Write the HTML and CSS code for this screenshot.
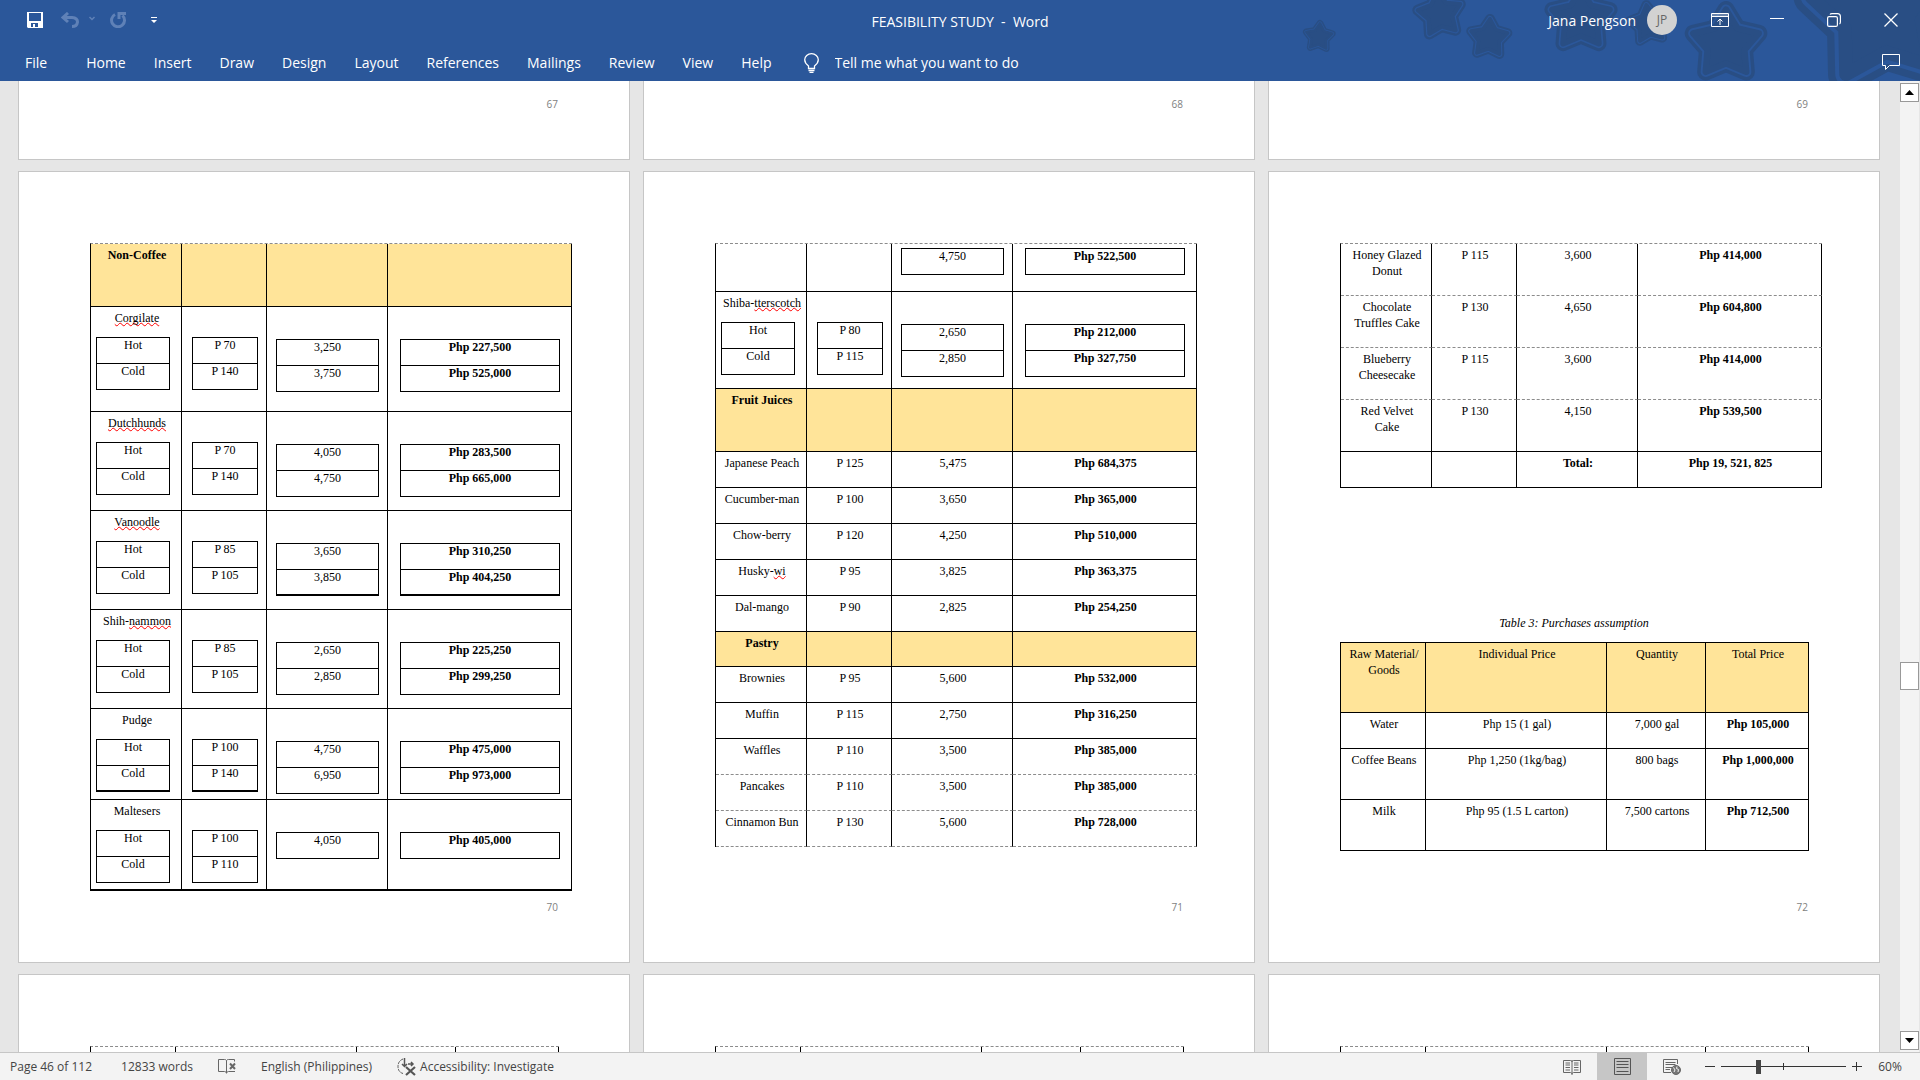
FILE: index.html
```html
<!DOCTYPE html>
<html lang="en">
  <head>
    <meta charset="UTF-8" />
    <meta name="viewport" content="width=device-width, initial-scale=1.0" />
    <title>FEASIBILITY STUDY - Word</title>
    <link rel="stylesheet" href="styles.css">
  </head>
  <body>
    <header class="header">
      <svg class="stars" width="620" height="81" viewBox="1300 0 620 81" aria-hidden="true">
        <defs>
          <path id="star-path" d="M0-80 26.500-36.400 76.100-24.700 42.800 13.900 47 64.700 0 45-47 64.700-42.800 13.900-76.100-24.700-26.500-36.400Z" />
          <g id="star" stroke-linejoin="round">
            <use href="#star-path" fill="#294e84" stroke="#294e84" stroke-width="40" />
            <use href="#star-path" fill="#2b579a" stroke="#2b579a" stroke-width="24" />
            <use href="#star-path" fill="#294e84" stroke="#294e84" stroke-width="15" />
          </g>
        </defs>
        <use href="#star" transform="translate(1319 37) rotate(4) scale(.17)" />
        <use href="#star" transform="translate(1440 14) rotate(-8) scale(.28)" />
        <use href="#star" transform="translate(1489 38) rotate(3) scale(.24)" />
        <use href="#star" transform="translate(1581 19) scale(.38)" />
        <use href="#star" transform="translate(1649 24) rotate(-8) scale(.24)" />
        <use href="#star" transform="translate(1726 44) scale(.43)" />
        <use href="#star" transform="translate(1882 12) rotate(-6) scale(.9)" />
      </svg>

      <div class="titlebar">
        <div class="quick">
          <button class="quick-btn save" aria-label="Save">
            <svg width="16" height="16" viewBox="0 0 16 16"><path fill="#fff" fill-rule="evenodd" d="M0 0H16V16H1L0 15ZM2 1V9H14V1ZM4 11V15H6V12H8V15H11V11Z" /></svg>
          </button>
          <button class="quick-btn undo" aria-label="Undo" disabled>
            <svg width="36" height="16" viewBox="0 0 36 16" fill="none" stroke="#5f81b7"><path stroke-width="3" d="M7 1 2 5.500 7 10M2 5.500H11Q16.500 6 16.500 10Q16 14.500 11 14.500" /><path stroke-width="1.500" d="M28.500 5 31 7.500 33.500 5" /></svg>
          </button>
          <button class="quick-btn redo" aria-label="Redo" disabled>
            <svg width="18" height="16" viewBox="0 0 18 16" fill="none" stroke="#5f81b7" stroke-width="3"><path d="M6 2.500A6.500 6.500 0 1 0 13.500 3.500M10 7V1.500H17" /></svg>
          </button>
          <button class="quick-btn" aria-label="Customize Quick Access Toolbar">
            <svg width="6" height="7" viewBox="0 0 6 7" fill="#fff"><path d="M0 0H6V1H0ZM0 3H6L3 6Z" /></svg>
          </button>
        </div>
        <h1 class="title">FEASIBILITY STUDY&nbsp; -&nbsp; Word</h1>
        <div class="window">
          <span class="user">Jana Pengson</span>
          <span class="avatar">JP</span>
          <button class="win-btn" aria-label="Ribbon Display Options">
            <svg width="18" height="14" viewBox="0 0 18 14" fill="none" stroke="#fff"><path d="M.5.5H17.500V13.500H.5ZM.5 3.500H17.500M9 12V6M6.500 8.500 9 6 11.500 8.500" /><path d="M1 2H17" opacity=".6" /></svg>
          </button>
          <button class="win-btn" aria-label="Minimize">
            <svg width="14" height="14" viewBox="0 0 14 14" stroke="#fff"><path d="M0 5.500H14" /></svg>
          </button>
          <button class="win-btn" aria-label="Restore">
            <svg width="14" height="14" viewBox="0 0 14 14" fill="none" stroke="#fff" stroke-width="1.200"><rect x=".6" y="3.600" width="9.800" height="9.800" rx="1.500" /><path d="M3 1.500Q3.500.6 5 .6H10.500Q13.400.6 13.400 3.500V9Q13.400 10.500 12.500 11" /></svg>
          </button>
          <button class="win-btn" aria-label="Close">
            <svg width="14" height="14" viewBox="0 0 14 14" stroke="#fff" stroke-width="1.300"><path d="M.5.5 13.500 13.500M13.500.5.5 13.500" /></svg>
          </button>
        </div>
      </div>

      <div class="ribbon">
        <nav class="tabs">
          <a class="tab file" href="#">File</a>
          <a class="tab" href="#">Home</a>
          <a class="tab" href="#">Insert</a>
          <a class="tab" href="#">Draw</a>
          <a class="tab" href="#">Design</a>
          <a class="tab" href="#">Layout</a>
          <a class="tab" href="#">References</a>
          <a class="tab" href="#">Mailings</a>
          <a class="tab" href="#">Review</a>
          <a class="tab" href="#">View</a>
          <a class="tab" href="#">Help</a>
        </nav>
        <label class="tell">
          <svg width="15" height="20" viewBox="0 0 15 20" fill="none" stroke="#fff" stroke-width="1.300"><path d="M4.500 15.500V13Q.7 10 .7 6.800A6.800 6.100 0 0 1 14.300 6.800Q14.300 10 10.500 13V15.500ZM4.500 17.500H10.500M5.500 19.300H9.500" /></svg>
          <input class="tell-input" type="text" placeholder="Tell me what you want to do" />
        </label>
        <button class="win-btn" aria-label="Comments">
          <svg width="18" height="17" viewBox="0 0 18 17" fill="none" stroke="#fff"><path d="M.5.500H17.500V11.500H7.500L3.500 15.500V11.500H.5Z" /></svg>
        </button>
      </div>
    </header>

    <main class="canvas">
      <div class="pages">
        <section class="page page-end"><div class="page-number">67</div></section>
        <section class="page page-end"><div class="page-number">68</div></section>
        <section class="page page-end"><div class="page-number">69</div></section>

        <section class="page">
          <table class="sheet sales thick">
            <colgroup><col class="c-name"><col class="c-price"><col class="c-qty"><col></colgroup>
            <tr class="band"><th>Non-Coffee</th><td></td><td></td><td></td></tr>
            <tr class="drink drink-tall">
              <td><span class="typo">Corgilate</span><table class="inner size"><tr><td>Hot</td></tr><tr><td>Cold</td></tr></table></td>
              <td><table class="inner price"><tr><td>P 70</td></tr><tr><td>P 140</td></tr></table></td>
              <td><table class="inner qty"><tr><td>3,250</td></tr><tr><td>3,750</td></tr></table></td>
              <td><table class="inner total"><tr><td>Php 227,500</td></tr><tr><td>Php 525,000</td></tr></table></td>
            </tr>
            <tr class="drink">
              <td><span class="typo">Dutchhunds</span><table class="inner size"><tr><td>Hot</td></tr><tr><td>Cold</td></tr></table></td>
              <td><table class="inner price"><tr><td>P 70</td></tr><tr><td>P 140</td></tr></table></td>
              <td><table class="inner qty"><tr><td>4,050</td></tr><tr><td>4,750</td></tr></table></td>
              <td><table class="inner total"><tr><td>Php 283,500</td></tr><tr><td>Php 665,000</td></tr></table></td>
            </tr>
            <tr class="drink">
              <td><span class="typo">Vanoodle</span><table class="inner size"><tr><td>Hot</td></tr><tr><td>Cold</td></tr></table></td>
              <td><table class="inner price"><tr><td>P 85</td></tr><tr><td>P 105</td></tr></table></td>
              <td><table class="inner qty thick"><tr><td>3,650</td></tr><tr><td>3,850</td></tr></table></td>
              <td><table class="inner total thick"><tr><td>Php 310,250</td></tr><tr><td>Php 404,250</td></tr></table></td>
            </tr>
            <tr class="drink">
              <td>Shih-<span class="typo">nammon</span><table class="inner size"><tr><td>Hot</td></tr><tr><td>Cold</td></tr></table></td>
              <td><table class="inner price"><tr><td>P 85</td></tr><tr><td>P 105</td></tr></table></td>
              <td><table class="inner qty"><tr><td>2,650</td></tr><tr><td>2,850</td></tr></table></td>
              <td><table class="inner total"><tr><td>Php 225,250</td></tr><tr><td>Php 299,250</td></tr></table></td>
            </tr>
            <tr class="drink drink-short">
              <td>Pudge<table class="inner size thick"><tr><td>Hot</td></tr><tr><td>Cold</td></tr></table></td>
              <td><table class="inner price thick"><tr><td>P 100</td></tr><tr><td>P 140</td></tr></table></td>
              <td><table class="inner qty"><tr><td>4,750</td></tr><tr><td>6,950</td></tr></table></td>
              <td><table class="inner total"><tr><td>Php 475,000</td></tr><tr><td>Php 973,000</td></tr></table></td>
            </tr>
            <tr class="drink drink-short">
              <td>Maltesers<table class="inner size"><tr><td>Hot</td></tr><tr><td>Cold</td></tr></table></td>
              <td><table class="inner price"><tr><td>P 100</td></tr><tr><td>P 110</td></tr></table></td>
              <td><table class="inner qty"><tr><td>4,050</td></tr></table></td>
              <td><table class="inner total"><tr><td>Php 405,000</td></tr></table></td>
            </tr>
          </table>
          <div class="page-number">70</div>
        </section>

        <section class="page">
          <table class="sheet sales">
            <colgroup><col class="c-name"><col class="c-price"><col class="c-qty"><col></colgroup>
            <tr class="drink carried">
              <td></td>
              <td></td>
              <td><table class="inner qty"><tr><td>4,750</td></tr></table></td>
              <td><table class="inner total"><tr><td>Php 522,500</td></tr></table></td>
            </tr>
            <tr class="drink drink-mid">
              <td>Shiba-<span class="typo">tterscotch</span><table class="inner size"><tr><td>Hot</td></tr><tr><td>Cold</td></tr></table></td>
              <td><table class="inner price"><tr><td>P 80</td></tr><tr><td>P 115</td></tr></table></td>
              <td><table class="inner qty"><tr><td>2,650</td></tr><tr><td>2,850</td></tr></table></td>
              <td><table class="inner total"><tr><td>Php 212,000</td></tr><tr><td>Php 327,750</td></tr></table></td>
            </tr>
            <tr class="band"><th>Fruit Juices</th><td></td><td></td><td></td></tr>
            <tr><td>Japanese Peach</td><td>P 125</td><td>5,475</td><td>Php 684,375</td></tr>
            <tr><td>Cucumber-man</td><td>P 100</td><td>3,650</td><td>Php 365,000</td></tr>
            <tr><td>Chow-berry</td><td>P 120</td><td>4,250</td><td>Php 510,000</td></tr>
            <tr><td>Husky-<span class="typo">wi</span></td><td>P 95</td><td>3,825</td><td>Php 363,375</td></tr>
            <tr><td>Dal-mango</td><td>P 90</td><td>2,825</td><td>Php 254,250</td></tr>
            <tr class="band band-short"><th>Pastry</th><td></td><td></td><td></td></tr>
            <tr><td>Brownies</td><td>P 95</td><td>5,600</td><td>Php 532,000</td></tr>
            <tr><td>Muffin</td><td>P 115</td><td>2,750</td><td>Php 316,250</td></tr>
            <tr class="open"><td>Waffles</td><td>P 110</td><td>3,500</td><td>Php 385,000</td></tr>
            <tr class="open"><td>Pancakes</td><td>P 110</td><td>3,500</td><td>Php 385,000</td></tr>
            <tr class="open"><td>Cinnamon Bun</td><td>P 130</td><td>5,600</td><td>Php 728,000</td></tr>
          </table>
          <div class="page-number">71</div>
        </section>

        <section class="page">
          <table class="sheet sales">
            <colgroup><col class="c-name"><col class="c-price"><col class="c-qty"><col></colgroup>
            <tr class="two open"><td>Honey Glazed Donut</td><td>P 115</td><td>3,600</td><td>Php 414,000</td></tr>
            <tr class="two open"><td>Chocolate Truffles Cake</td><td>P 130</td><td>4,650</td><td>Php 604,800</td></tr>
            <tr class="two open"><td>Blueberry Cheesecake</td><td>P 115</td><td>3,600</td><td>Php 414,000</td></tr>
            <tr class="two"><td>Red Velvet Cake</td><td>P 130</td><td>4,150</td><td>Php 539,500</td></tr>
            <tr><td></td><td></td><th>Total:</th><td>Php 19, 521, 825</td></tr>
          </table>
          <p class="caption" id="table-3">Table 3: Purchases assumption</p>
          <table class="sheet purchases" aria-labelledby="table-3">
            <colgroup><col class="c-goods"><col class="c-unit"><col class="c-amount"><col></colgroup>
            <tr class="band"><th>Raw Material/ Goods</th><th>Individual Price</th><th>Quantity</th><th>Total Price</th></tr>
            <tr><td>Water</td><td>Php 15 (1 gal)</td><td>7,000 gal</td><td>Php 105,000</td></tr>
            <tr class="two"><td>Coffee Beans</td><td>Php 1,250 (1kg/bag)</td><td>800 bags</td><td>Php 1,000,000</td></tr>
            <tr class="two"><td>Milk</td><td>Php 95 (1.5 L carton)</td><td>7,500 cartons</td><td>Php 712,500</td></tr>
          </table>
          <div class="page-number">72</div>
        </section>

        <section class="page">
          <table class="sheet purchases next">
            <colgroup><col class="c-goods"><col class="c-unit"><col class="c-amount"><col></colgroup>
            <tr><td></td><td></td><td></td><td></td></tr>
          </table>
        </section>
        <section class="page">
          <table class="sheet purchases next">
            <colgroup><col class="c-goods"><col class="c-unit"><col class="c-amount"><col></colgroup>
            <tr><td></td><td></td><td></td><td></td></tr>
          </table>
        </section>
        <section class="page">
          <table class="sheet purchases next">
            <colgroup><col class="c-goods"><col class="c-unit"><col class="c-amount"><col></colgroup>
            <tr><td></td><td></td><td></td><td></td></tr>
          </table>
        </section>
      </div>

      <div class="scrollbar">
        <button class="scroll-btn" aria-label="Scroll up"><svg width="9" height="5" viewBox="0 0 9 5"><path d="M0 5 4.500 0 9 5Z" /></svg></button>
        <div class="scroll-track"><div class="scroll-thumb"></div></div>
        <button class="scroll-btn" aria-label="Scroll down"><svg width="9" height="5" viewBox="0 0 9 5"><path d="M0 0 4.500 5 9 0Z" /></svg></button>
      </div>
    </main>

    <footer class="status">
      <button class="status-item page-count">Page 46 of 112</button>
      <button class="status-item">12833 words</button>
      <button class="status-item" aria-label="Proofing errors">
        <svg width="18" height="15" viewBox="0 0 18 15" fill="none" stroke="#666"><path d="M8.500 1.500V14.500M8.500 1.500Q8 .5 6.500.5H.5V12.500H6.500Q8 12.500 8.500 14Q9 12.500 10.500 12.500H17M8.500 1.500Q9 .5 10.500.5H16.500V2.500" /><path stroke-width="2" d="M12 4.500 17 10M17 4.500 12 10" /></svg>
      </button>
      <button class="status-item">English (Philippines)</button>
      <button class="status-item access">
        <svg width="19" height="18" viewBox="0 0 19 18" fill="none" stroke="#555"><path stroke-dasharray="3 1" d="M6 1Q1 3 1 8.500Q1 14 6 15.500" /><path stroke-width="1.500" d="M7.500 0V8M5 6 7.500 8.500 10 6M11 6H16M14 4 16 6 14 8" /><path stroke-width="2.200" d="M9 9 18 17M18 9 9 17" /></svg>
        Accessibility: Investigate
      </button>
      <div class="views">
        <button class="view-btn" aria-label="Read Mode">
          <svg width="18" height="16" viewBox="0 0 18 16" fill="none" stroke="#666"><path d="M.5 1.500H7.500L9 2.500 10.500 1.500H17.500V13.500H10.500L9 14.500 7.500 13.500H.5ZM9 1V16M2.500 4H7M2.500 6H7M2.500 8.500H7M2.500 11H7M11 4H15.500M11 6H15.500M11 8.500H15.500M11 11H15.500" /></svg>
        </button>
        <button class="view-btn active" aria-label="Print Layout" aria-pressed="true">
          <svg width="17" height="17" viewBox="0 0 17 17" fill="none" stroke="#555"><path d="M.5.5H16.500V16.500H.5ZM2.500 3.500H14.500M2.500 6.500H14.500M2.500 9.500H14.500M2.500 13.500H14.500" /></svg>
        </button>
        <button class="view-btn" aria-label="Web Layout">
          <svg width="18" height="16" viewBox="0 0 18 16" fill="none" stroke="#666"><path d="M8 13.500H.5V.5H14.500V5M2.500 3.500H12.500M2.500 5.500H12.500M2.500 8.500H9M2.500 10.500H7" /><circle cx="13" cy="11" r="4.500" fill="#777" /><path stroke="#f3f3f3" d="M10.500 8.500 12 11 11 13M14 7.500 13.500 9.500 15.500 10.500 15 13" /></svg>
        </button>
      </div>
      <div class="zoom">
        <button class="zoom-btn" aria-label="Zoom out"><svg width="10" height="10" viewBox="0 0 10 10" stroke="#333"><path d="M0 4.500H10" /></svg></button>
        <input class="zoom-range" type="range" min="0" max="100" value="29" aria-label="Zoom" />
        <button class="zoom-btn" aria-label="Zoom in"><svg width="10" height="10" viewBox="0 0 10 10" stroke="#333"><path d="M0 4.500H10M4.500 0V9" /></svg></button>
        <button class="status-item zoom-level">60%</button>
      </div>
    </footer>
  </body>
</html>
```
FILE: styles.css
```css
* {
  margin: 0;
  padding: 0;
  box-sizing: border-box;
}

body {
  height: 100vh;
  display: flex;
  flex-direction: column;
  overflow: hidden;
  background: #e6e6e6;
  font-family: "Open Sans", "Noto Sans", sans-serif;
  font-size: 14px;
}

button,
input {
  border: none;
  background: none;
  font: inherit;
  color: inherit;
}

svg {
  display: block;
}

/* Header */
.header {
  position: relative;
  flex: none;
  background: #2b579a;
  color: #fff;
}

.stars {
  position: absolute;
  top: 0;
  right: 0;
}

.titlebar {
  position: relative;
  height: 44px;
  display: grid;
  grid-template-columns: 1fr auto 1fr;
}

.quick {
  display: flex;
  align-items: center;
  height: 40px;
  padding-left: 27px;
}

.save {
  margin-right: 18px;
}

.undo {
  margin-right: 12px;
}

.redo {
  margin-right: 24px;
}

.title {
  font-size: 14px;
  font-weight: 400;
  line-height: 44px;
}

.window {
  display: flex;
  justify-content: flex-end;
  align-items: center;
  height: 40px;
  padding-right: 1px;
}

.user {
  margin-right: 11px;
}

.avatar {
  width: 30px;
  height: 30px;
  margin-right: 14px;
  border-radius: 50%;
  background: #d2d2d2;
  color: #666;
  font-size: 12px;
  line-height: 30px;
  text-align: center;
}

.win-btn {
  width: 57px;
  height: 38px;
  display: flex;
  justify-content: center;
  align-items: center;
}

.ribbon {
  position: relative;
  height: 37px;
  display: flex;
  align-items: center;
  padding-right: 1px;
}

.tabs {
  display: flex;
  padding-left: 11px;
}

.tab {
  padding: 0 14px;
  color: #fff;
  line-height: 36px;
  text-decoration: none;
}

.file {
  margin-right: 11px;
}

.tell {
  flex: 1;
  display: flex;
  align-items: center;
  gap: 16px;
  padding-left: 18px;
}

.tell-input {
  width: 240px;
}

.tell-input::placeholder {
  color: #fff;
}

/* Document area */
.canvas {
  flex: 1;
  min-height: 0;
  display: flex;
}

.pages {
  flex: 1;
  display: grid;
  grid-template-columns: repeat(3, minmax(0, 1fr));
  align-content: start;
  gap: 11px 13px;
  padding: 0 20px 0 18px;
  overflow: hidden;
}

.page {
  min-height: 792px;
  display: flex;
  flex-direction: column;
  padding: 71px 71px 47px;
  border: 1px solid #c6c6c6;
  background: #fff;
}

.page-end {
  min-height: 79px;
  padding-top: 0;
  border-top: none;
}

.page-number {
  margin-top: auto;
  color: #7f7f7f;
  font-size: 10px;
  line-height: 16px;
  text-align: right;
}

/* Tables */
.sheet {
  flex: none;
  table-layout: fixed;
  border-spacing: 0;
  border-left: 1px solid #000;
  border-top: 1px dashed #8c8c8c;
  font-family: "Liberation Serif", "Times New Roman", serif;
  font-size: 12px;
  line-height: 16px;
  text-align: center;
}

.sales {
  width: calc(100% + 14px);
}

.purchases {
  width: calc(100% + 1px);
  border-top: 1px solid #000;
}

.next {
  border-top: 1px dashed #8c8c8c;
}

.c-name {
  width: 91px;
}

.c-price,
.c-goods {
  width: 85px;
}

.c-qty {
  width: 121px;
}

.c-unit {
  width: 181px;
}

.c-amount {
  width: 99px;
}

.sheet > tbody > tr > td,
.sheet > tbody > tr > th {
  height: 36px;
  padding: 3px 4px 0 6px;
  border-right: 1px solid #000;
  border-bottom: 1px solid #000;
  vertical-align: top;
}

.sheet > tbody > tr > td:last-child {
  font-weight: 700;
}

.sheet > tbody > .band > td,
.sheet > tbody > .band > th {
  height: 63px;
  background: #ffe499;
}

.sheet > tbody > .band-short > td,
.sheet > tbody > .band-short > th {
  height: 35px;
}

.purchases > tbody > .band > th {
  height: 70px;
  font-weight: 400;
}

.sheet > tbody > .two > td {
  height: 52px;
}

.purchases > tbody > .two > td {
  height: 51px;
}

.sheet > tbody > .open > td {
  border-bottom: 1px dashed #8c8c8c;
}

.sheet > tbody > .drink > td {
  height: 99px;
  padding: 3px 0 0 2px;
}

.sheet > tbody > .drink-tall > td {
  height: 105px;
}

.sheet > tbody > .drink-mid > td {
  height: 97px;
}

.sheet > tbody > .drink-short > td {
  height: 91px;
}

.sheet > tbody > .carried > td {
  height: 48px;
}

.inner.thick > tbody > tr:last-child > td,
.sheet.thick > tbody > tr:last-child > td {
  border-bottom: 2px solid #000;
}

/* Hot / cold tables inside a drink row */
.inner {
  border-spacing: 0;
  border: 1px solid #000;
  border-bottom: none;
  line-height: 14px;
}

.inner td {
  height: 26px;
  border-bottom: 1px solid #000;
  vertical-align: top;
}

.size {
  width: calc(100% - 14px);
  margin: 11px 0 0 3px;
}

.price {
  width: calc(100% - 16px);
  margin: 27px 0 0 8px;
}

.qty {
  width: calc(100% - 15px);
  margin: 29px 0 0 7px;
}

.total {
  width: calc(100% - 21px);
  margin: 29px 0 0 10px;
}

.carried .inner {
  margin-top: 1px;
}

.typo {
  text-decoration: underline wavy #f00 1px;
  text-decoration-skip-ink: none;
  text-underline-offset: 0;
}

.caption {
  margin: 127px 0 11px;
  font-family: "Liberation Serif", "Times New Roman", serif;
  font-size: 12px;
  font-style: italic;
  line-height: 16px;
  text-align: center;
}

/* Scrollbar */
.scrollbar {
  width: 20px;
  display: flex;
  flex-direction: column;
  padding: 2px 1px 2px 0;
  background: linear-gradient(to right, #f3f3f3 19px, #e6e6e6 19px);
}

.scroll-btn {
  height: 19px;
  display: flex;
  justify-content: center;
  align-items: center;
  border: 1px solid #999;
  background: #fff;
}

.scroll-track {
  flex: 1;
  padding-top: 560px;
}

.scroll-thumb {
  height: 28px;
  border: 1px solid #999;
  background: #fff;
}

/* Status bar */
.status {
  flex: none;
  height: 28px;
  display: flex;
  align-items: center;
  padding-left: 10px;
  border-top: 1px solid #c6c6c6;
  background: #f3f3f3;
  color: #444;
  font-size: 12px;
}

.status-item {
  margin-right: 25px;
}

.page-count {
  margin-right: 29px;
}

.access {
  display: flex;
  align-items: center;
  gap: 4px;
}

.views {
  height: 100%;
  display: flex;
  margin-left: auto;
}

.view-btn {
  width: 50px;
  display: flex;
  justify-content: center;
  align-items: center;
}

.active {
  background: #c6c6c6;
}

.zoom {
  display: flex;
  align-items: center;
  margin-left: 8px;
}

.zoom-range {
  width: 125px;
  height: 16px;
  margin: 0 6px;
  appearance: none;
  background:
    linear-gradient(#333, #333) center / 100% 1px no-repeat,
    linear-gradient(#333, #333) center / 1px 7px no-repeat;
}

.zoom-range::-webkit-slider-thumb {
  appearance: none;
  width: 5px;
  height: 14px;
  background: #444;
}

.zoom-level {
  width: 24px;
  margin: 0 18px 0 16px;
}
```
